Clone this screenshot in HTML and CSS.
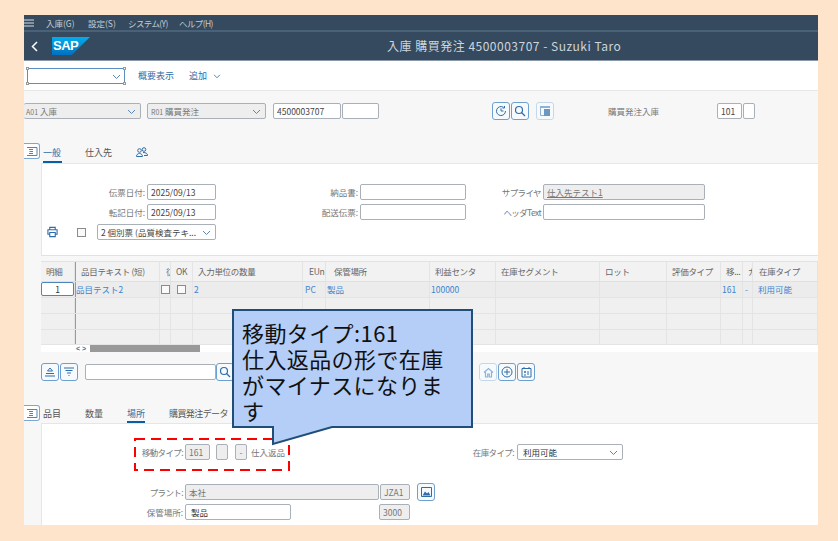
FILE: index.html
```html
<!DOCTYPE html>
<html lang="ja">
<head>
<meta charset="utf-8">
<title>入庫 購買発注</title>
<link rel="stylesheet" href="styles.css">
</head>
<body>
<div class="app">
  <div class="menubar">
    <svg class="burger" width="10" height="8" viewBox="0 0 10 8"><path d="M0 1h10M0 4h10M0 7h10" stroke="#d5dce3" stroke-width="1.2"/></svg>
    <span class="m1">入庫(G)</span><span class="m2">設定(S)</span><span class="m3 tight">システム(Y)</span><span class="tight">ヘルプ(H)</span>
  </div>
  <div class="titlebar">
    <svg class="back" width="7" height="11" viewBox="0 0 7 11"><path d="M6 1L1.5 5.5 6 10" fill="none" stroke="#fff" stroke-width="1.5"/></svg>
    <div class="logo"><span>SAP</span></div>
    <div class="title">入庫 購買発注 4500003707 - Suzuki Taro</div>
  </div>
  <div class="toolbar">
    <div class="sel focus"><i class="h tl"></i><i class="h tr"></i><i class="h bl"></i><i class="h br"></i><svg class="chev" width="9" height="6" viewBox="0 0 9 6"><path d="M1 1l3.5 3.5L8 1" fill="none" stroke="#5b86b3"/></svg></div>
    <a class="tlink t1">概要表示</a>
    <a class="tlink">追加<svg class="addchev" width="8" height="5" viewBox="0 0 9 6"><path d="M1 1l3.5 3.5L8 1" fill="none" stroke="#2f6da8"/></svg></a>
  </div>
  <div class="gray">
    <div class="selrow">
      <div class="fld dis w117 noleft"><span class="sm">A01</span> 入庫<svg class="chev" width="9" height="6" viewBox="0 0 9 6"><path d="M1 1l3.5 3.5L8 1" fill="none" stroke="#5b86b3"/></svg></div>
      <div class="fld dis w119 ml6"><span class="sm">R01</span> 購買発注<svg class="chev" width="9" height="6" viewBox="0 0 9 6"><path d="M1 1l3.5 3.5L8 1" fill="none" stroke="#5b86b3"/></svg></div>
      <div class="fld w68 ml7">4500003707</div>
      <div class="fld w37 ml1"></div>
      <div class="btn ml113"><svg width="12" height="12" viewBox="0 0 12 12" fill="none" stroke="#2f6da8"><path d="M10.5 6A4.5 4.5 0 1 1 8.5 2.3M6 3.3V6h2.5M9.5 1v2h-2"/></svg></div>
      <div class="btn ml1"><svg width="12" height="12" viewBox="0 0 12 12" fill="none" stroke="#2f6da8" stroke-width="1.2"><circle cx="5" cy="5" r="3.5"/><path d="M7.5 7.5L11 11"/></svg></div>
      <div class="btn faint ml7"><svg width="10" height="10" viewBox="0 0 10 10"><path fill="#8fb2d6" d="M0 0h10v2H0z"/><path fill="#2f6da8" d="M4 3h6v7H4z" opacity=".7"/><path fill="none" stroke="#8fb2d6" d="M.5 2v7.5H4"/></svg></div>
      <span class="lbl plain ml54">購買発注入庫</span>
      <div class="fld w25 ml58">101</div>
      <div class="fld w12 ml1"></div>
    </div>
    <div class="tabs tabs1">
      <div class="collapse"><svg width="12" height="9" viewBox="0 0 12 9" fill="none" stroke="#4d86bd"><path d="M1 .5h10v8H1M7 2.5H3M7 4.5H5L3.5 4.5M7 6.5H3"/></svg></div>
      <span class="tab on a1">一般</span><span class="tab a2">仕入先</span>
      <span class="tab a3"><svg width="12" height="10" viewBox="0 0 12 10" fill="none" stroke="#2f6da8"><circle cx="3.5" cy="3.5" r="1.8"/><circle cx="8" cy="2.5" r="1.8"/><path d="M.5 9.5c0-4 6-4 6 0zM7 5.5c3 0 4.5 1 4.5 3H8"/></svg></span>
    </div>
    <div class="panel p1">
      <div class="formgrid">
        <span class="lbl">伝票日付:</span><div class="fld">2025/09/13</div>
        <span class="lbl">納品書:</span><div class="fld"></div>
        <span class="lbl tight">サプライヤ</span><div class="fld dis"><u>仕入先テスト1</u></div>
        <span class="lbl">転記日付:</span><div class="fld">2025/09/13</div>
        <span class="lbl">配送伝票:</span><div class="fld"></div>
        <span class="lbl tight">ヘッダText</span><div class="fld"></div>
        <div class="printrow">
          <svg width="12" height="12" viewBox="0 0 12 12" fill="none" stroke="#2f6da8" stroke-width="1.2"><path d="M3 3.5V1h6v2.5M3 8.5H1v-5h10v5H9M3 6.5h6V11H3z"/></svg>
          <i class="chk c1"></i>
          <div class="fld s119">2 個別票 (品質検査テキ...<svg class="chev" width="9" height="6" viewBox="0 0 9 6"><path d="M1 1l3.5 3.5L8 1" fill="none" stroke="#5b86b3"/></svg></div>
        </div>
      </div>
    </div>
    <div class="gridwrap">
      <div class="row head">
        <div>明細</div><div class="fz">品目テキスト (短)</div><div>彷</div><div>OK</div><div>入力単位の数量</div><div>EUn</div><div>保管場所</div><div>利益センタ</div><div>在庫セグメント</div><div>ロット</div><div>評価タイプ</div><div>移...</div><div>ガ</div><div>在庫タイプ</div>
      </div>
      <div class="row data">
        <div class="pos"><span class="posbox">1</span></div><div class="fz nl">品目テスト2</div><div class="cc"><i class="chk"></i></div><div class="cc"><i class="chk"></i></div><div>2</div><div>PC</div><div>製品</div><div>100000</div><div></div><div></div><div></div><div>161</div><div>-</div><div>利用可能</div>
      </div>
      <div class="row empty"><div></div><div class="fz"></div><div></div><div></div><div></div><div></div><div></div><div></div><div></div><div></div><div></div><div></div><div></div><div></div></div>
      <div class="row empty"><div></div><div class="fz"></div><div></div><div></div><div></div><div></div><div></div><div></div><div></div><div></div><div></div><div></div><div></div><div></div></div>
      <div class="row empty last"><div></div><div class="fz"></div><div></div><div></div><div></div><div></div><div></div><div></div><div></div><div></div><div></div><div></div><div></div><div></div></div>
      <div class="scroll"><span class="arrows">&lt; &gt;</span><span class="thumb"></span></div>
    </div>
    <div class="tools2">
      <div class="btn"><svg width="12" height="10" viewBox="0 0 12 10" fill="none" stroke="#2f6da8"><path d="M6 1L3.5 4h5zM2 6.5h8M1 9h10"/></svg></div>
      <div class="btn ml1"><svg width="12" height="10" viewBox="0 0 12 10" fill="none" stroke="#2f6da8"><path d="M1 1h10M2.5 3.5h7M4 6h4M5.5 8.5h1"/></svg></div>
      <div class="fld w131 ml7"></div>
      <div class="btn"><svg width="12" height="12" viewBox="0 0 12 12" fill="none" stroke="#2f6da8" stroke-width="1.2"><circle cx="5" cy="5" r="3.5"/><path d="M7.5 7.5L11 11"/></svg></div>
      <div class="btn faint ml245"><svg width="11" height="11" viewBox="0 0 11 11" fill="none" stroke="#8fb2d6" stroke-width="1.2"><path d="M1 5.5L5.5 1.5 10 5.5M2.500 5v5h2.200V7h1.600v3h2.200V5"/></svg></div>
      <div class="btn ml1"><svg width="12" height="12" viewBox="0 0 12 12" fill="none" stroke="#2f6da8"><circle cx="6" cy="6" r="5"/><path d="M6 3v6M3 6h6"/></svg></div>
      <div class="btn ml1"><svg width="11" height="12" viewBox="0 0 11 12" fill="none" stroke="#2f6da8"><path d="M1 2.5h9V11H1zM3 1v2M8 1v2M3 6h2M4 5v2M3 9h2M7 5v4"/></svg></div>
    </div>
    <div class="tabs tabs2">
      <div class="collapse"><svg width="12" height="9" viewBox="0 0 12 9" fill="none" stroke="#4d86bd"><path d="M1 .5h10v8H1M7 2.5H3M7 4.5H5L3.5 4.5M7 6.5H3"/></svg></div>
      <span class="tab b1">品目</span><span class="tab b2">数量</span><span class="tab on b3">場所</span><span class="tab b4 tight">購買発注データ</span>
    </div>
    <div class="panel p2">
      <div class="mrow">
        <span class="lbl l143 tight">移動タイプ:</span>
        <div class="fld dis w25">161</div>
        <div class="fld dis w12 ml6"></div>
        <div class="fld dis w12 ml7 ctr">-</div>
        <span class="lbl plain ml4 w34">仕入返品</span>
        <span class="lbl w231 tight">在庫タイプ:</span>
        <div class="fld w106 ml1 dark">利用可能<svg class="chev" width="9" height="6" viewBox="0 0 9 6"><path d="M1 1l3.5 3.5L8 1" fill="none" stroke="#5b86b3"/></svg></div>
      </div>
      <div class="mrow plant">
        <span class="lbl l143 tight">プラント:</span>
        <div class="fld dis w194">本社</div>
        <div class="fld dis w30 ml1">JZA1</div>
        <div class="btn ml7"><svg width="11" height="10" viewBox="0 0 11 10"><path fill="none" stroke="#2f6da8" d="M.5.5h10v9H.5z"/><path fill="#2f6da8" d="M1.5 8.5L4 4.5l2 2 1.5-1.5 2 3.5z"/></svg></div>
      </div>
      <div class="mrow store">
        <span class="lbl l143">保管場所:</span>
        <div class="fld w106 dark">製品</div>
        <div class="fld dis w31 ml88">3000</div>
      </div>
    </div>
  </div>
  <svg class="dash" width="156" height="33" viewBox="0 0 156 33"><rect x="1" y="1" width="154" height="31" fill="none" stroke="#f00" stroke-width="2" stroke-dasharray="10 6"/></svg>
  <svg class="callout" width="242" height="137" viewBox="0 0 242 137"><path d="M1 1H240V118H100L41 135V118H1z" fill="#b4cef8" stroke="#1f4e79" stroke-width="2"/></svg>
  <div class="calltext">移動タイプ:161<br>仕入返品の形で在庫<br>がマイナスになりま<br>す</div>
</div>
</body>
</html>
```
FILE: styles.css
```css
* { box-sizing: border-box; }
html, body { margin: 0; height: 100%; }
body {
  background: #fde4cb;
  padding: 15px 20px 16px 24px;
  font-family: "Noto Sans CJK JP", "Noto Sans", sans-serif;
  font-size: 9px;
  color: #555;
  overflow: hidden;
}
.app { position: relative; width: 794px; height: 510px; overflow: hidden; background: #fff; }
.tight { letter-spacing: -.6px; }

.menubar {
  height: 17px; background: #354a5f; border-bottom: 2px solid #4a6278;
  display: flex; align-items: center; color: #c3ccd5; font-size: 8.5px; white-space: nowrap;
}
.burger { margin-right: 12px; }
.menubar span { display: block; }
.m1 { width: 42px; } .m2 { width: 40px; } .m3 { width: 51px; }

.titlebar { height: 29px; background: #354a5f; border-bottom: 1px solid #8a99a8; position: relative; display: flex; align-items: center; }
.back { margin-left: 7px; }
.logo {
  margin-left: 14px; width: 38px; height: 18px;
  background: linear-gradient(#00aeef, #0070c0);
  clip-path: polygon(0 0, 100% 0, 52% 100%, 0 100%);
  color: #fff; font: bold 13px/18px "Liberation Sans", sans-serif; padding-left: 1px; letter-spacing: -.5px;
}
.title { position: absolute; left: 363px; top: 5px; color: #cdd5dc; font-size: 12px; line-height: 18px; letter-spacing: .5px; white-space: nowrap; }

.toolbar { height: 29px; background: #fff; display: flex; align-items: center; padding-left: 3px; }
.sel.focus { width: 98px; height: 16px; border: 1px solid #5b8fc5; position: relative; }
.sel.focus .chev { position: absolute; right: 3px; top: 5px; }
.h { position: absolute; width: 3px; height: 3px; border: 1px solid #999; background: #fff; }
.tl { left: -2px; top: -2px; } .tr { right: -2px; top: -2px; } .bl { left: -2px; bottom: -2px; } .br { right: -2px; bottom: -2px; }
.tlink { color: #2f6da8; font-size: 9px; white-space: nowrap; }
.t1 { margin-left: 13px; margin-right: 15px; }
.addchev { margin-left: 6px; }

.gray { background: #f7f7f7; border-top: 1px solid #e8e8e8; height: 435px; }
.selrow { display: flex; align-items: center; height: 16px; margin-top: 12px; }

.fld {
  height: 16px; border: 1px solid #a9b0b8; border-radius: 2px; background: #fff;
  font-size: 8.5px; line-height: 14px; padding-left: 3px; color: #444; white-space: nowrap; position: relative; flex: none; overflow: hidden;
}
.fld.dis { background: #eeeeee; color: #777; }
.fld .chev { position: absolute; right: 4px; top: 5px; }
.noleft { border-left: 0; padding-left: 2px; }
.dark { color: #333; padding-left: 5px; }
.sm { font-size: 7px; }
.w12 { width: 12px; } .w25 { width: 25px; } .w30 { width: 30px; } .w31 { width: 31px; } .w37 { width: 37px; } .w68 { width: 68px; }
.w106 { width: 106px; } .w117 { width: 117px; } .w119 { width: 119px; } .w131 { width: 131px; } .w194 { width: 194px; }
.ctr { text-align: center; padding-left: 0; }
.ml1 { margin-left: 1px; } .ml4 { margin-left: 4px; } .ml6 { margin-left: 6px; } .ml7 { margin-left: 7px; }
.ml54 { margin-left: 54px; } .ml58 { margin-left: 58px; } .ml88 { margin-left: 88px; } .ml113 { margin-left: 113px; } .ml245 { margin-left: 245px; }

.btn {
  width: 18px; height: 18px; flex: none; border: 1px solid #6f9fcd; border-radius: 3px; background: #f7fafd;
  display: flex; align-items: center; justify-content: center;
}
.btn.faint { border-color: #c4d8ea; }

.lbl { font-size: 8.5px; color: #777; text-align: right; white-space: nowrap; line-height: 16px; padding-right: 2px; }
.lbl.plain { text-align: left; flex: none; padding-right: 0; }

.tabs { position: relative; height: 20px; display: flex; align-items: flex-start; }
.tabs1 { margin-top: 24px; }
.tabs2 { margin-top: 24px; height: 18px; }
.collapse {
  width: 16px; height: 16px; border: 1px solid #7ba7d0; border-left: 0; border-radius: 0 3px 3px 0; background: #fff;
  display: flex; align-items: center; justify-content: center; flex: none;
}
.tab { font-size: 9px; line-height: 20px; color: #555; white-space: nowrap; height: 20px; flex: none; }
.tabs2 .tab { height: 18px; line-height: 17px; }
.tab.on { color: #2f6da8; border-bottom: 2px solid #0a5ea8; }
.a1 { margin-left: 3px; width: 19px; } .a2 { margin-left: 23px; } .a3 { margin-left: 24px; line-height: 20px; }
.a3 svg { vertical-align: -1px; }
.b1 { margin-left: 3px; } .b2 { margin-left: 24px; } .b3 { margin-left: 24px; } .b4 { margin-left: 24px; }

.panel { margin-left: 17px; background: #fff; border-top: 1px solid #e6e6e6; border-left: 1px solid #e6e6e6; }
.p1 { height: 93px; padding-top: 20px; border-bottom: 1px solid #e2e2e2; }
.p2 { height: 102px; padding-top: 20px; }
.formgrid { display: grid; grid-template-columns: 105px 69px 144px 106px 77px 162px; grid-auto-rows: 16px; row-gap: 4px; }
.printrow { grid-column: 1 / 3; display: flex; align-items: center; padding-left: 5px; }
.chk { display: block; width: 9px; height: 9px; border: 1px solid #8b8b8b; background: #fafafa; flex: none; }
.c1 { margin-left: 19px; margin-right: 11px; }
.s119 { width: 119px; padding-left: 3px; }

.gridwrap { margin: 5px 0 0 17px; border-top: 1px solid #e2e2e2; background: #fff; }
.row { display: grid; grid-template-columns: 34px 85px 11px 22px 110px 23px 104px 66px 104px 67px 54px 22px 10px 65px; }
.row > div { border-right: 1px solid #e4e4e4; overflow: hidden; white-space: nowrap; }
.row .fz { border-left: 1px solid #9a9a9a; }
.head { height: 20px; background: #f2f2f2; border-bottom: 1px solid #e0e0e0; font-size: 8.5px; line-height: 19px; color: #666; letter-spacing: -.3px; }
.head > div { padding-left: 5px; }
.head > div:nth-child(3), .head > div:nth-child(6), .head > div:nth-child(14) { padding-left: 6px; }
.head > div:nth-child(7) { padding-left: 8px; }
.data { height: 16px; background: #ececec; border-bottom: 1px solid #e4e4e4; color: #3a85d0; font-size: 8.5px; line-height: 15px; }
.data > div { padding-left: 1px; }
.data > div:nth-child(6) { padding-left: 2px; }
.data > div:nth-child(13) { padding-left: 2px; }
.data > div:nth-child(14) { padding-left: 5px; }
.row.data > .pos { padding: 0; overflow: visible; }
.posbox { display: block; width: 33px; height: 14px; background: #fff; border: 1px solid #4d86bd; border-radius: 2px; color: #333; text-align: center; line-height: 12px; }
.row.data > .cc { display: flex; align-items: center; justify-content: center; padding: 0; }
.row.data > .nl { padding-left: 0; }
.empty { height: 16px; background: #f0f0f0; border-bottom: 1px solid #e4e4e4; }
.empty.last { height: 15px; }
.scroll { height: 7px; background: #fff; display: flex; align-items: center; padding-left: 35px; }
.arrows { width: 14px; font: bold 7px/7px "Liberation Sans", sans-serif; color: #2f6da8; }
.thumb { width: 110px; height: 7px; background: #999; }

.tools2 { display: flex; align-items: center; margin: 11px 0 0 17px; height: 18px; }

.mrow { display: flex; align-items: center; height: 16px; }
.l143 { width: 143px; flex: none; }
.w34 { width: 34px; }
.w231 { width: 231px; flex: none; }
.plant { margin-top: 24px; }
.store { margin-top: 4px; }

.dash { position: absolute; left: 110px; top: 423px; }
.callout { position: absolute; left: 208px; top: 294px; }
.calltext { position: absolute; left: 218px; top: 304px; width: 225px; font-size: 22px; letter-spacing: .4px; line-height: 26px; color: #111; white-space: nowrap; }
```
